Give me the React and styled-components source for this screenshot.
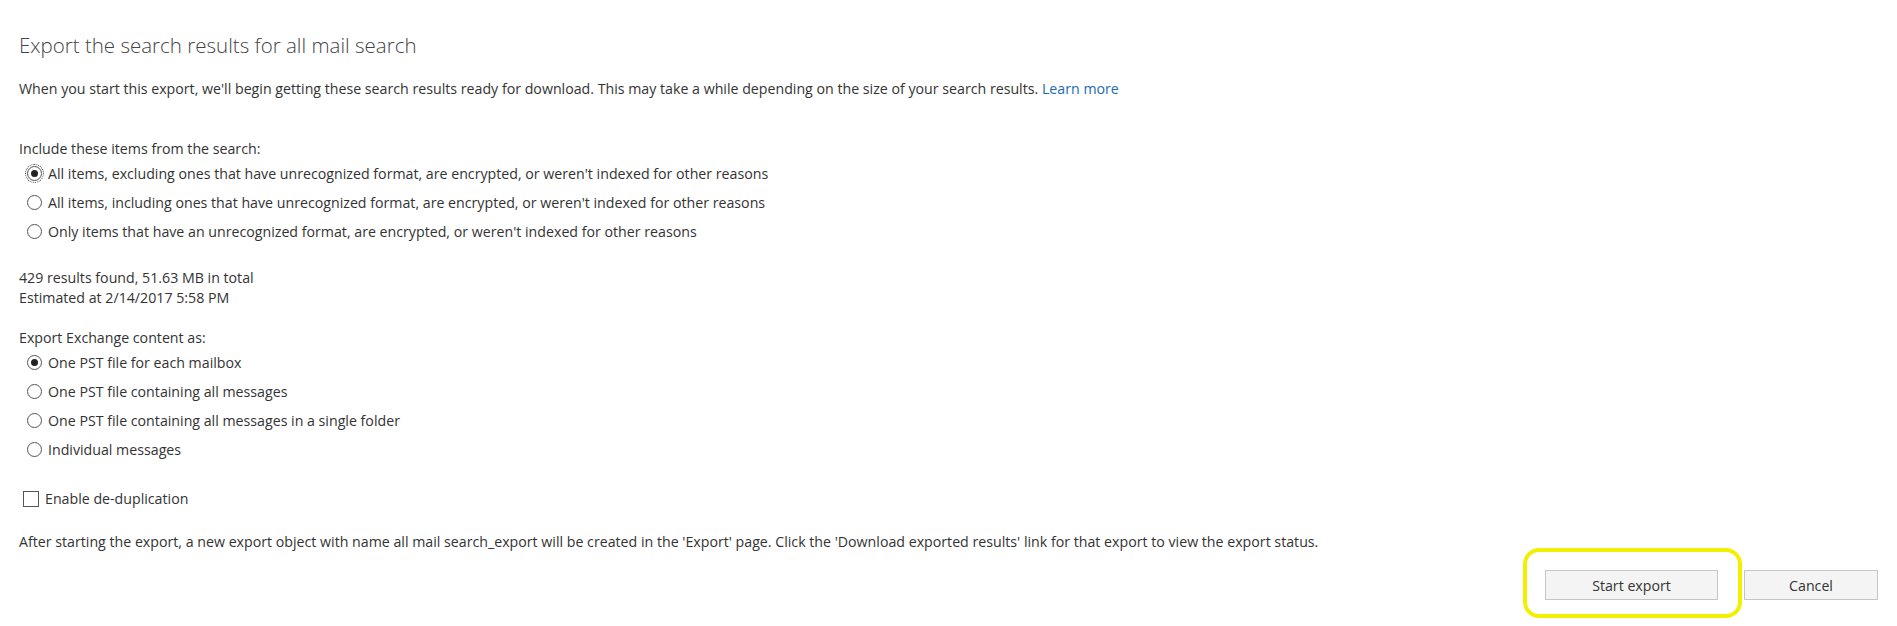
import React from 'react';
import styled, { createGlobalStyle } from 'styled-components';

const GlobalStyle = createGlobalStyle`
  body {
    margin: 0;
    background: #fff;
    font-family: "Open Sans", "Noto Sans", sans-serif;
    color: #333;
  }
`;

const Page = styled.div`
  position: relative;
  padding: 30px 19px 0 19px;
  height: 626px;
  box-sizing: border-box;
  font-size: 14.2px;
`;

const Title = styled.h1`
  margin: 0;
  font-size: 20.5px;
  font-weight: 300;
  color: #444;
  line-height: 30px;
`;

const Text = styled.p`
  margin: ${(p) => p.$mt || 0}px 0 0;
  line-height: ${(p) => p.$lh || 20}px;
`;

const Link = styled.a`
  color: #1b6bb0;
  text-decoration: none;
`;

const Group = styled.div`
  margin-top: ${(p) => p.$mt || 0}px;
  display: flex;
  flex-direction: column;
`;

const Label = styled.div`
  line-height: 20px;
`;

const Option = styled.label`
  display: flex;
  align-items: center;
  gap: 6px;
  height: 29px;
  padding-left: ${(p) => p.$indent || 8}px;
`;

const Radio = styled.span`
  width: 13px;
  height: 13px;
  border: 1px solid #555;
  border-radius: 50%;
  box-sizing: content-box;
  display: inline-flex;
  align-items: center;
  justify-content: center;
  background: #fff;
  outline: ${(p) => (p.$focus ? '1px dotted #333' : 'none')};
  outline-offset: 1px;

  &::after {
    content: '';
    width: 7px;
    height: 7px;
    border-radius: 50%;
    background: ${(p) => (p.$checked ? '#222' : 'transparent')};
  }
`;

const Box = styled.span`
  width: 14px;
  height: 14px;
  border: 1px solid #555;
  background: #fff;
`;

const Buttons = styled.div`
  display: flex;
  justify-content: flex-end;
  gap: 26px;
  margin-top: 18px;
`;

const Button = styled.button`
  width: ${(p) => p.$w}px;
  height: 30px;
  background: #f4f4f4;
  border: 1px solid #c6c6c6;
  font-family: inherit;
  font-size: 14.2px;
  color: #333;
`;

const Highlight = styled.div`
  position: absolute;
  left: 1523px;
  top: 548px;
  width: 219px;
  height: 70px;
  box-sizing: border-box;
  border: 4px solid #f2f000;
  border-radius: 16px;
  pointer-events: none;
`;

const includeOptions = [
  "All items, excluding ones that have unrecognized format, are encrypted, or weren't indexed for other reasons",
  "All items, including ones that have unrecognized format, are encrypted, or weren't indexed for other reasons",
  "Only items that have an unrecognized format, are encrypted, or weren't indexed for other reasons",
];

const exportOptions = [
  'One PST file for each mailbox',
  'One PST file containing all messages',
  'One PST file containing all messages in a single folder',
  'Individual messages',
];

export default function App() {
  return (
    <>
      <GlobalStyle />
      <Page>
        <Title>Export the search results for all mail search</Title>
        <Text $mt={19}>
          When you start this export, we'll begin getting these search results ready for download. This may
          take a while depending on the size of your search results. <Link href="#">Learn more</Link>
        </Text>

        <Group $mt={40}>
          <Label>Include these items from the search:</Label>
          {includeOptions.map((o, i) => (
            <Option key={i}>
              <Radio $checked={i === 0} $focus={i === 0} />
              {o}
            </Option>
          ))}
        </Group>

        <Text $mt={22}>429 results found, 51.63 MB in total</Text>
        <Text>Estimated at 2/14/2017 5:58 PM</Text>

        <Group $mt={20}>
          <Label>Export Exchange content as:</Label>
          {exportOptions.map((o, i) => (
            <Option key={i}>
              <Radio $checked={i === 0} />
              {o}
            </Option>
          ))}
        </Group>

        <Group $mt={20}>
          <Option $indent={4}>
            <Box />
            Enable de-duplication
          </Option>
        </Group>

        <Text $mt={19}>
          After starting the export, a new export object with name all mail search_export will be created in the
          'Export' page. Click the 'Download exported results' link for that export to view the export status.
        </Text>

        <Buttons>
          <Button $w={173}>Start export</Button>
          <Button $w={134}>Cancel</Button>
        </Buttons>
        <Highlight />
      </Page>
    </>
  );
}
